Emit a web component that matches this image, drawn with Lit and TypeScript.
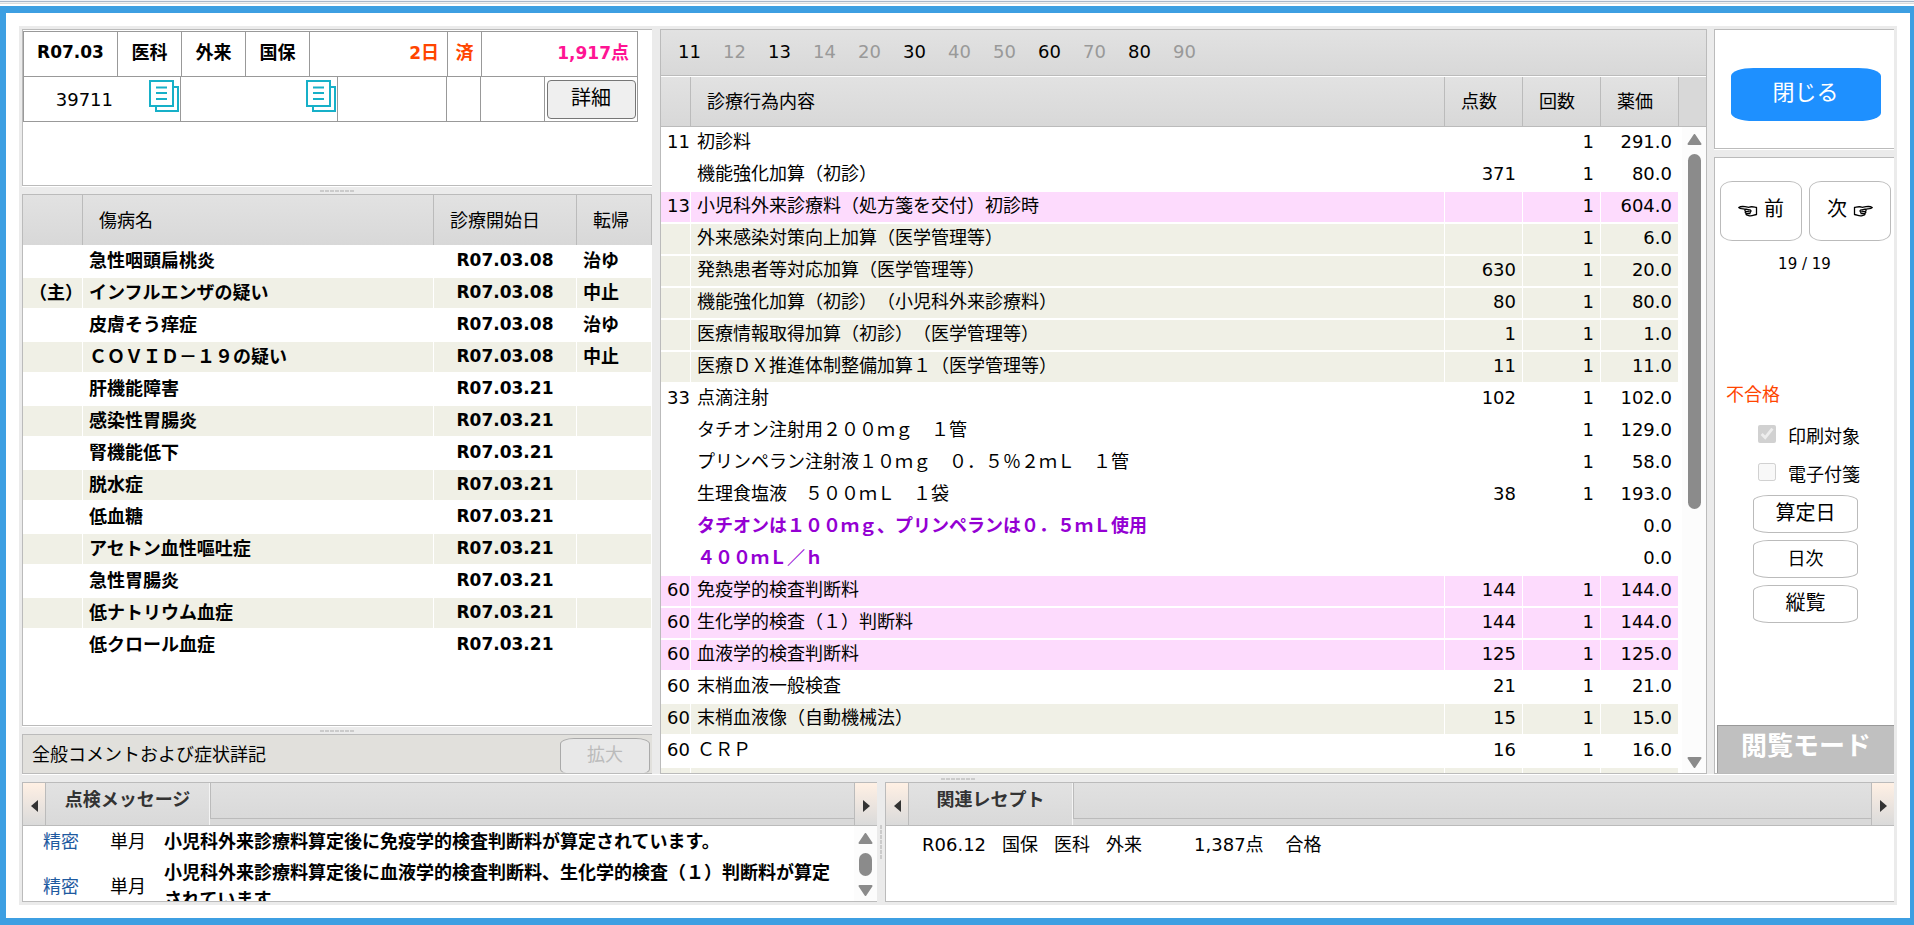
import { LitElement, html, css, svg } from "lit";
import { customElement } from "lit/decorators.js";
import { classMap } from "lit/directives/class-map.js";

type Disease = { main?: string; name: string; start: string; outcome?: string };
type Act = { code?: string; name: string; points?: string; count?: string; price: string; tone?: "pink" | "beige" | "note" };

const sections = [
  ["11", true], ["12", false], ["13", true], ["14", false], ["20", false], ["30", true],
  ["40", false], ["50", false], ["60", true], ["70", false], ["80", true], ["90", false],
] as [string, boolean][];

const diseases: Disease[] = [
  { name: "急性咽頭扁桃炎", start: "R07.03.08", outcome: "治ゆ" },
  { main: "（主）", name: "インフルエンザの疑い", start: "R07.03.08", outcome: "中止" },
  { name: "皮膚そう痒症", start: "R07.03.08", outcome: "治ゆ" },
  { name: "ＣＯＶＩＤ－１９の疑い", start: "R07.03.08", outcome: "中止" },
  { name: "肝機能障害", start: "R07.03.21" },
  { name: "感染性胃腸炎", start: "R07.03.21" },
  { name: "腎機能低下", start: "R07.03.21" },
  { name: "脱水症", start: "R07.03.21" },
  { name: "低血糖", start: "R07.03.21" },
  { name: "アセトン血性嘔吐症", start: "R07.03.21" },
  { name: "急性胃腸炎", start: "R07.03.21" },
  { name: "低ナトリウム血症", start: "R07.03.21" },
  { name: "低クロール血症", start: "R07.03.21" },
];

const acts: Act[] = [
  { code: "11", name: "初診料", count: "1", price: "291.0" },
  { name: "機能強化加算（初診）", points: "371", count: "1", price: "80.0" },
  { code: "13", name: "小児科外来診療料（処方箋を交付）初診時", count: "1", price: "604.0", tone: "pink" },
  { name: "外来感染対策向上加算（医学管理等）", count: "1", price: "6.0", tone: "beige" },
  { name: "発熱患者等対応加算（医学管理等）", points: "630", count: "1", price: "20.0", tone: "beige" },
  { name: "機能強化加算（初診）（小児科外来診療料）", points: "80", count: "1", price: "80.0", tone: "beige" },
  { name: "医療情報取得加算（初診）（医学管理等）", points: "1", count: "1", price: "1.0", tone: "beige" },
  { name: "医療ＤＸ推進体制整備加算１（医学管理等）", points: "11", count: "1", price: "11.0", tone: "beige" },
  { code: "33", name: "点滴注射", points: "102", count: "1", price: "102.0" },
  { name: "タチオン注射用２００ｍｇ　１管", count: "1", price: "129.0" },
  { name: "プリンペラン注射液１０ｍｇ　０．５％２ｍＬ　１管", count: "1", price: "58.0" },
  { name: "生理食塩液　５００ｍＬ　１袋", points: "38", count: "1", price: "193.0" },
  { name: "タチオンは１００ｍｇ、プリンペランは０．５ｍＬ使用", price: "0.0", tone: "note" },
  { name: "４００ｍＬ／ｈ", price: "0.0", tone: "note" },
  { code: "60", name: "免疫学的検査判断料", points: "144", count: "1", price: "144.0", tone: "pink" },
  { code: "60", name: "生化学的検査（１）判断料", points: "144", count: "1", price: "144.0", tone: "pink" },
  { code: "60", name: "血液学的検査判断料", points: "125", count: "1", price: "125.0", tone: "pink" },
  { code: "60", name: "末梢血液一般検査", points: "21", count: "1", price: "21.0" },
  { code: "60", name: "末梢血液像（自動機械法）", points: "15", count: "1", price: "15.0", tone: "beige" },
  { code: "60", name: "ＣＲＰ", points: "16", count: "1", price: "16.0" },
  { name: "", price: "", tone: "beige" },
];

const messages = [
  "小児科外来診療料算定後に免疫学的検査判断料が算定されています。",
  "小児科外来診療料算定後に血液学的検査判断料、生化学的検査（１）判断料が算定されています。",
];

const shared = css`
  * { box-sizing: border-box; }
  button { font: inherit; color: inherit; margin: 0; padding: 0; }
  table { border-collapse: collapse; border-spacing: 0; table-layout: fixed; }
  th, td { padding: 0; font-weight: inherit; text-align: left; white-space: nowrap; }
  .num { font-size: 17px; }
`;

const docIcon = svg`
  <svg width="30" height="32" viewBox="0 0 30 32" fill="none" stroke="#17b0c8" stroke-width="2">
    <path d="M24 7h5v24H7v-5" />
    <rect x="1" y="1" width="23" height="25" />
    <path d="M7 7.500h11M7 13h11M7 19h11" />
  </svg>`;

const handPath = svg`
  <path d="M0.800 2.600C2.500 1.300 5 1.400 7 1.700L11 2.300C13 1.200 15 1.800 18.500 2.300V9.500C16 9.800 14.500 11.300 11.500 10.800L8.500 9.800M0.800 2.600C1.800 4 4 3.700 8 4.200M8 4.200C6.500 4.800 6.500 6 8 6.400M8 4.200L11 5M8 6.400L11.500 6.800M8 6.400C6.800 7.200 7 8 8.500 8.400M8.500 8.400L12 8.700M8.500 8.400C7.800 9 8 9.600 8.500 9.800M11 5C13 4.600 13.500 6 12.300 7.200" />`;
const handLeft = html`<svg class="hand" width="20" height="12" viewBox="0 0 20 12" aria-hidden="true">${handPath}</svg>`;
const handRight = html`<svg class="hand" width="20" height="12" viewBox="0 0 20 12" aria-hidden="true"><g transform="matrix(-1 0 0 1 20 0)">${handPath}</g></svg>`;

@customElement("scroll-track")
export class ScrollTrack extends LitElement {
  static styles = css`
    :host { display: flex; flex-direction: column; align-items: center; width: 24px; background: #fcfcfc; padding: 7px 0 5px; }
    svg { display: block; flex: none; }
    .lane { flex: 1; display: flex; flex-direction: column; margin: 9px 0; }
    .thumb { width: 13px; border-radius: 7px; background: #8b8b8b; flex: var(--thumb, 1) 1 0; }
    .rest { flex: var(--rest, 0) 1 0; }
  `;
  render() {
    return html`
      <svg width="15" height="11" viewBox="0 0 15 11"><path d="M7.500 1 L13.500 10 H1.500Z" fill="#8b8b8b" stroke="#8b8b8b" stroke-width="2" stroke-linejoin="round"/></svg>
      <div class="lane"><div class="thumb"></div><div class="rest"></div></div>
      <svg width="15" height="11" viewBox="0 0 15 11"><path d="M7.500 10 L13.500 1 H1.500Z" fill="#8b8b8b" stroke="#8b8b8b" stroke-width="2" stroke-linejoin="round"/></svg>
    `;
  }
}

@customElement("split-bar")
export class SplitBar extends LitElement {
  static styles = css`
    :host { display: flex; align-items: center; justify-content: center; height: 8px; flex: none; border-top: 1px solid #fff; }
    :host([vertical]) { width: 8px; height: auto; border: 0; }
    :host([plain]) .grip { display: none; }
    .grip { width: 35px; height: 2px; background: repeating-linear-gradient(90deg, #cbcbcb 0 4px, #ebebeb 4px 5px); }
    :host([vertical]) .grip { width: 2px; height: 35px; background: repeating-linear-gradient(#cbcbcb 0 4px, #ebebeb 4px 5px); }
  `;
  render() {
    return html`<div class="grip"></div>`;
  }
}

@customElement("tab-strip")
export class TabStrip extends LitElement {
  static properties = { label: { type: String } };
  declare label: string;
  static styles = [shared, css`
    :host { display: flex; flex: none; height: 43px; border-bottom: 1px solid #bbb; background: #d9d9d9; }
    .arrow { flex: none; width: 23px; border: 0; border-right: 1px solid #bbb; background: linear-gradient(#fff0e4, #dadada); display: flex; align-items: center; justify-content: center; padding-top: 4px; }
    .arrow.next { border-right: 0; border-left: 1px solid #bbb; }
    .tab { width: 164px; border: 0; border-right: 1px solid #f4f4f4; background: linear-gradient(#e2e2e2, #d9d9d9); font-weight: 700; color: #333; padding-bottom: 9px; }
    .rest { flex: 1; height: 36px; border-left: 1px solid #bbb; border-bottom: 1px solid #bbb; background: linear-gradient(#e1e1e1, #d9d9d9); }
  `];
  render() {
    return html`
      <button class="arrow" aria-label="前のタブ"><svg width="7" height="12" viewBox="0 0 7 12"><path d="M7 0v12L0 6z" fill="#333"/></svg></button>
      <button class="tab">${this.label}</button>
      <div class="rest"></div>
      <button class="arrow next" aria-label="次のタブ"><svg width="7" height="12" viewBox="0 0 7 12"><path d="M0 0v12L7 6z" fill="#333"/></svg></button>
    `;
  }
}

@customElement("app-root")
export class AppRoot extends LitElement {
  static styles = [shared, css`
    :host {
      display: flex; flex-direction: column; height: 100vh; background: #fff; color: #000;
      font: 18px/27px "DejaVu Sans", "Noto Sans CJK JP", sans-serif;
      text-spacing-trim: space-all;
    }
    .chrome { flex: none; height: 6px; background: linear-gradient(#eef2f8 0 1px, #a9b7c9 1px 2px, #eef0f2 2px 3px, #dcdcdc 3px 4px, #fff 4px); }
    .frame { flex: 1; min-height: 0; display: flex; border: solid #3d9fe2; border-width: 7px 4px 7px 6px; padding: 13px; }
    .area { flex: 1; min-width: 0; display: flex; flex-direction: column; background: #ebebeb; padding: 3px; }
    .upper { flex: 1; min-height: 0; display: grid; grid-template-columns: 630px 8px minmax(0, 1fr) 7px 180px; grid-template-rows: minmax(0, 1fr); }
    .lower { flex: none; height: 120px; display: grid; grid-template-columns: minmax(0, 855fr) 8px minmax(0, 1009fr); grid-template-rows: minmax(0, 1fr); }
    .column { display: flex; flex-direction: column; min-height: 0; min-width: 0; }
    .panel { background: #fff; border: 1px solid #bbb; border-right: 0; overflow: hidden; min-height: 0; }
    .grow { flex: 1; }

    .receipt { flex: none; height: 157px; padding-top: 1px; }
    .receipt table { width: 615px; height: 46px; }
    .receipt table + table { margin-top: -1px; }
    .receipt td { border: 1px solid #999; text-align: center; vertical-align: middle; }
    .receipt .bold { font-weight: 700; }
    .receipt td.end { text-align: right; padding-right: 8px; }
    .receipt .bold td { padding-bottom: 3px; }
    .red { color: #ff4500; }
    .magenta { color: #ff1493; }
    .with-doc { display: flex; justify-content: flex-end; align-items: center; gap: 36px; padding-right: 1px; }
    .with-doc svg { display: block; margin-bottom: 6px; }
    .detail { display: block; width: 89px; height: 39px; margin: 0 auto; border: 1px solid #767676; border-radius: 4px; background: #efefef; font-size: 20px; padding-bottom: 2px; }

    .head th { height: 50px; background: linear-gradient(#e2e2e2, #d8d8d8); border-right: 1px solid #bbb; padding-left: 16px; }
    .rows { width: 100%; border-collapse: separate; }
    .diseases tbody { font-weight: 700; }
    .diseases tbody td { height: 32px; padding: 0 0 2px 6px; border: solid #fff; border-width: 1px 1px 1px 0; }
    .diseases tbody tr:nth-child(even) { background: #f0f0e6; }
    .diseases td.date { text-align: center; padding-left: 0; }

    .comment { flex: none; height: 40px; display: flex; align-items: center; justify-content: space-between; background: #e1e0dc; padding: 0 2px 0 9px; }
    .comment button { width: 90px; height: 37px; margin-top: 4px; border: 1px solid #aaa; border-bottom-color: #ccc; border-radius: 14px / 6px; background: #e8e8e8; color: #bbb; padding-bottom: 4px; }

    .acts { display: flex; flex-direction: column; border-right: 1px solid #bbb; }
    .sections { flex: none; height: 46px; display: flex; align-items: center; border-bottom: 1px solid #bbb; background: linear-gradient(#e2e2e2, #d8d8d8); padding: 0 6px 2px; }
    .sections button { width: 45px; border: 0; background: none; color: #999; }
    .sections button.on { color: #000; }
    .acts .head { flex: none; margin-top: 1px; border-bottom: 1px solid #bbb; background: #d8d8d8; padding-right: 27px; }
    .acts .head th { height: 49px; }
    .acts-body { flex: 1; min-height: 0; display: flex; }
    .clip { flex: 1; min-width: 0; overflow: hidden; }
    .c-code { width: 30px; }
    .c-num { width: 78px; }
    .acts tbody td { height: 32px; padding: 0 6px 3px; border: solid #fff; border-width: 1px 1px 1px 0; }
    .acts tbody td:first-child { padding-right: 0; }
    .acts tbody td.right { text-align: right; }
    .pink { background: #fddbfd; }
    .beige { background: #f0f0e6; }
    .note .name { font-weight: 700; color: #9400d3; }
    .acts scroll-track { --thumb: 354; --rest: 239; margin-left: 3px; }

    .close-box { flex: none; height: 120px; display: flex; justify-content: center; padding: 38px 0 0 2px; }
    .close { width: 150px; height: 53px; border: 0; border-radius: 15%; background: #1e90ff; color: #fff; font-size: 22px; padding-bottom: 4px; }
    .side { display: flex; flex-direction: column; }
    .nav { display: grid; grid-template-columns: 1fr 1fr; gap: 7px; padding: 23px 3px 0 5px; }
    .nav button { height: 60px; font-size: 20px; padding-bottom: 4px; display: flex; align-items: center; justify-content: center; gap: 6px; }
    .hand { fill: none; stroke: #000; stroke-width: 1.3; stroke-linejoin: round; stroke-linecap: round; margin-top: 3px; }
    .round { border: 1px solid #bbb; border-radius: 15%; background: #fff; }
    .pos { text-align: center; font-size: 15px; margin-top: 10px; }
    .state { margin: 103px 0 0 11px; color: #ff4500; }
    .check { display: flex; align-items: center; gap: 12px; margin-left: 43px; height: 38px; }
    .check input { width: 18px; height: 18px; margin: 0 0 4px; }
    .checks { margin-top: 9px; }
    .tools { display: flex; flex-direction: column; gap: 7px; width: 105px; margin: 2px 0 0 38px; }
    .tools button { height: 38px; padding-bottom: 2px; }
    .tools .big { font-size: 20px; }
    .mode { margin: auto 0 0 2px; height: 48px; border: solid #999; border-width: 1px 0 0 1px; background: #c0c0c0; color: #fff; font-size: 26px; font-weight: 700; text-align: center; line-height: 41px; }

    .tabbed { display: flex; flex-direction: column; }
    .messages { flex: 1; min-height: 0; display: flex; }
    .messages table { width: 100%; }
    .messages td { padding: 2px 0; vertical-align: middle; }
    .messages .kind { padding-left: 20px; color: #1e5aa0; }
    .messages .text { font-weight: 700; white-space: normal; padding-right: 10px; }
    .messages scroll-track { width: 23px; }
    .related { display: flex; gap: 16px; padding: 5px 36px; }
    .related .total { margin-left: 36px; margin-right: 6px; }
  `];

  render() {
    return html`
      <div class="chrome"></div>
      <div class="frame">
        <main class="area">
          <div class="upper">
            ${this.renderLeft()}
            <split-bar vertical plain></split-bar>
            ${this.renderActs()}
            <split-bar vertical plain></split-bar>
            ${this.renderSide()}
          </div>
          <split-bar></split-bar>
          ${this.renderLower()}
        </main>
      </div>
    `;
  }

  renderLeft() {
    return html`
      <div class="column">
        <section class="panel receipt">
          <table>
            <colgroup><col style="width:94px"><col style="width:64px"><col style="width:64px"><col style="width:64px"><col style="width:138px"><col style="width:34px"><col></colgroup>
            <tr class="bold">
              <td class="num">R07.03</td><td>医科</td><td>外来</td><td>国保</td>
              <td class="end red"><span class="num">2</span>日</td><td class="red">済</td>
              <td class="end magenta"><span class="num">1,917</span>点</td>
            </tr>
          </table>
          <table>
            <colgroup><col style="width:157px"><col style="width:157px"><col style="width:109px"><col style="width:34px"><col style="width:64px"><col></colgroup>
            <tr>
              <td><div class="with-doc"><span>39711</span>${docIcon}</div></td>
              <td><div class="with-doc">${docIcon}</div></td>
              <td></td><td></td><td></td>
              <td><button class="detail">詳細</button></td>
            </tr>
          </table>
        </section>
        <split-bar></split-bar>
        <section class="panel grow diseases">
          <table class="rows">
            <colgroup><col style="width:60px"><col><col style="width:143px"><col style="width:75px"></colgroup>
            <thead class="head"><tr><th></th><th>傷病名</th><th>診療開始日</th><th>転帰</th></tr></thead>
            <tbody>
              ${diseases.map((d) => html`<tr><td>${d.main}</td><td>${d.name}</td><td class="date num">${d.start}</td><td>${d.outcome}</td></tr>`)}
            </tbody>
          </table>
        </section>
        <split-bar></split-bar>
        <section class="panel comment"><span>全般コメントおよび症状詳記</span><button disabled>拡大</button></section>
      </div>
    `;
  }

  renderActs() {
    const cols = html`<colgroup><col class="c-code"><col><col class="c-num"><col class="c-num"><col class="c-num"></colgroup>`;
    return html`
      <section class="panel acts">
        <nav class="sections">${sections.map(([n, on]) => html`<button class=${classMap({ on })}>${n}</button>`)}</nav>
        <div class="head">
          <table class="rows">${cols}<thead><tr><th></th><th>診療行為内容</th><th>点数</th><th>回数</th><th>薬価</th></tr></thead></table>
        </div>
        <div class="acts-body">
          <div class="clip">
            <table class="rows">${cols}
              <tbody>
                ${acts.map((a) => html`
                  <tr class=${a.tone ?? ""}>
                    <td>${a.code}</td><td class="name">${a.name}</td>
                    <td class="right">${a.points}</td><td class="right">${a.count}</td><td class="right">${a.price}</td>
                  </tr>`)}
              </tbody>
            </table>
          </div>
          <scroll-track></scroll-track>
        </div>
      </section>
    `;
  }

  renderSide() {
    return html`
      <div class="column">
        <section class="panel close-box"><button class="close">閉じる</button></section>
        <split-bar plain></split-bar>
        <section class="panel grow side">
          <div class="nav"><button class="round">${handLeft}前</button><button class="round">次${handRight}</button></div>
          <div class="pos">19 / 19</div>
          <div class="state">不合格</div>
          <div class="checks">
            <label class="check"><input type="checkbox" checked disabled>印刷対象</label>
            <label class="check"><input type="checkbox" disabled>電子付箋</label>
          </div>
          <div class="tools">
            <button class="round big">算定日</button>
            <button class="round">日次</button>
            <button class="round big">縦覧</button>
          </div>
          <div class="mode">閲覧モード</div>
        </section>
      </div>
    `;
  }

  renderLower() {
    return html`
      <div class="lower">
        <section class="panel tabbed">
          <tab-strip label="点検メッセージ"></tab-strip>
          <div class="messages">
            <div class="clip">
              <table>
                <colgroup><col style="width:87px"><col style="width:54px"><col></colgroup>
                ${messages.map((m) => html`<tr><td class="kind">精密</td><td>単月</td><td class="text">${m}</td></tr>`)}
              </table>
            </div>
            <scroll-track></scroll-track>
          </div>
        </section>
        <split-bar vertical></split-bar>
        <section class="panel tabbed">
          <tab-strip label="関連レセプト"></tab-strip>
          <div class="related">
            <span>R06.12</span><span>国保</span><span>医科</span><span>外来</span>
            <span class="total">1,387点</span><span>合格</span>
          </div>
        </section>
      </div>
    `;
  }
}
